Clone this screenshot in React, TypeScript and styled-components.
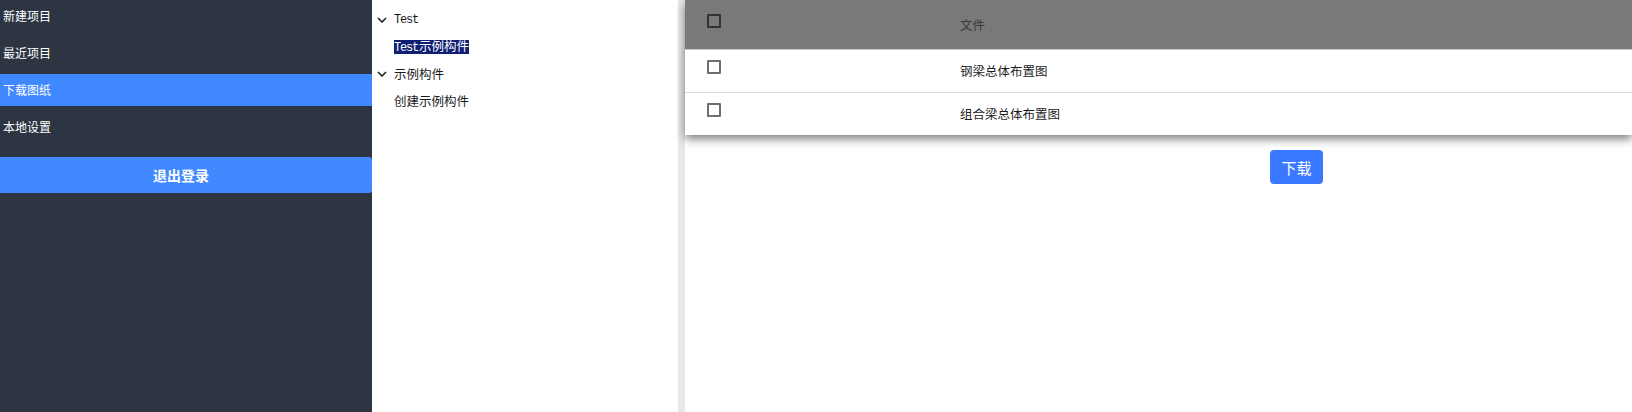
import React from "react";
import styled, { createGlobalStyle } from "styled-components";

const GlobalStyle = createGlobalStyle`
  html, body { margin: 0; padding: 0; background: #ffffff; }
  body { font-family: "Noto Sans CJK SC", "Noto Sans", sans-serif; }
  * { box-sizing: border-box; }
`;

const Page = styled.div`
  display: flex;
  height: 412px;
  width: 1632px;
  overflow: hidden;
`;

const Sidebar = styled.nav`
  width: 372px;
  flex: none;
  background: #2c3541;
  display: flex;
  flex-direction: column;
`;

const NavItem = styled.div<{ $active?: boolean }>`
  height: 32px;
  line-height: 32px;
  margin-bottom: 5px;
  padding-left: 3px;
  font-size: 12px;
  color: #ffffff;
  background: ${(p) => (p.$active ? "#4088ff" : "transparent")};
`;

const LogoutButton = styled.button`
  margin-top: 9px;
  height: 36px;
  width: 372px;
  border: none;
  border-radius: 0 3px 3px 0;
  background: #4289ff;
  color: #ffffff;
  font-family: "Noto Sans CJK SC", sans-serif;
  font-weight: 700;
  font-size: 14px;
  padding: 0 10px 0 0;
`;

const TreePanel = styled.div`
  width: 306px;
  flex: none;
  padding-top: 6px;
  display: flex;
  flex-direction: column;
`;

const TreeRow = styled.div<{ $indent?: boolean }>`
  height: 27px;
  display: flex;
  align-items: center;
  padding-left: ${(p) => (p.$indent ? "22px" : "2px")};
  gap: 4px;
  font-size: 12.5px;
  color: #1a1a1a;
`;

const Chevron = styled.span`
  width: 16px;
  height: 16px;
  display: flex;
  align-items: center;
  justify-content: center;
`;

const Latin = styled.span`
  font-family: "Liberation Mono", "DejaVu Sans Mono", monospace;
  font-size: 12px;
  letter-spacing: -1.2px;
  margin-right: 1px;
`;

const Selected = styled.span`
  background: #101f74;
  color: #ffffff;
  line-height: 12px;
`;

const Divider = styled.div`
  width: 7px;
  flex: none;
  background: #e8e8e8;
`;

const Main = styled.main`
  flex: 1;
  display: flex;
  flex-direction: column;
`;

const Card = styled.div`
  background: #ffffff;
  box-shadow: 0 4px 9px rgba(0, 0, 0, 0.5);
`;

const HeaderRow = styled.div`
  display: grid;
  grid-template-columns: 275px 1fr;
  height: 50px;
  background: #797979;
  border-bottom: 1px solid #c8c8c8;
  color: #3a3a3a;
  font-size: 12.5px;
`;

const Row = styled.div<{ $last?: boolean }>`
  display: grid;
  grid-template-columns: 275px 1fr;
  height: ${(p) => (p.$last ? "42px" : "43px")};
  border-bottom: ${(p) => (p.$last ? "none" : "1px solid #dcdcdc")};
  color: #1c1c1c;
  font-size: 12.5px;
`;

const CheckCell = styled.div<{ $top: number }>`
  padding-left: 22px;
  padding-top: ${(p) => p.$top}px;
`;

const TextCell = styled.div`
  display: flex;
  align-items: center;
  padding-bottom: 1px;
`;

const Box = styled.span<{ $dark?: boolean }>`
  display: block;
  width: 14px;
  height: 14px;
  border: 2px solid ${(p) => (p.$dark ? "#333333" : "#6e6e6e")};
  border-radius: 1px;
`;

const Actions = styled.div`
  padding-top: 15px;
  padding-left: 585px;
`;

const DownloadButton = styled.button`
  width: 53px;
  height: 34px;
  border: none;
  border-radius: 4px;
  background: #3a78ff;
  color: #ffffff;
  font-family: "Noto Sans CJK SC", sans-serif;
  font-size: 15px;
  padding: 0;
`;

const ChevronIcon = () => (
  <svg width="10" height="6" viewBox="0 0 10 6">
    <path d="M1 1 L5 5 L9 1" fill="none" stroke="#222" strokeWidth="1.6" />
  </svg>
);

const files = ["钢梁总体布置图", "组合梁总体布置图"];

export default function App() {
  return (
    <>
      <GlobalStyle />
      <Page>
        <Sidebar>
          <NavItem>新建项目</NavItem>
          <NavItem>最近项目</NavItem>
          <NavItem $active>下载图纸</NavItem>
          <NavItem>本地设置</NavItem>
          <LogoutButton>退出登录</LogoutButton>
        </Sidebar>
        <TreePanel>
          <TreeRow>
            <Chevron>
              <ChevronIcon />
            </Chevron>
            <Latin>Test</Latin>
          </TreeRow>
          <TreeRow $indent>
            <Selected>
              <Latin>Test</Latin>示例构件
            </Selected>
          </TreeRow>
          <TreeRow>
            <Chevron>
              <ChevronIcon />
            </Chevron>
            示例构件
          </TreeRow>
          <TreeRow $indent>创建示例构件</TreeRow>
        </TreePanel>
        <Divider />
        <Main>
          <Card>
            <HeaderRow>
              <CheckCell $top={14}>
                <Box $dark />
              </CheckCell>
              <TextCell>文件</TextCell>
            </HeaderRow>
            {files.map((f, i) => (
              <Row key={f} $last={i === files.length - 1}>
                <CheckCell $top={10}>
                  <Box />
                </CheckCell>
                <TextCell>{f}</TextCell>
              </Row>
            ))}
          </Card>
          <Actions>
            <DownloadButton>下载</DownloadButton>
          </Actions>
        </Main>
      </Page>
    </>
  );
}
